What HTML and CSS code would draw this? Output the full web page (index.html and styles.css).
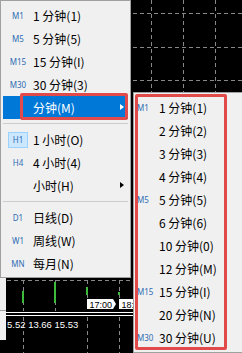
FILE: index.html
```html
<!DOCTYPE html>
<html lang="zh">

<head>
    <meta charset="UTF-8">
    <meta name="viewport" content="width=device-width, initial-scale=1.0">
    <title>周期菜单</title>
    <link rel="stylesheet" href="styles.css">
</head>

<body>
    <div class="screen">
        <!-- Chart behind the menus -->
        <svg class="chart" width="242" height="353" viewBox="0 0 242 353">
            <g class="grid">
                <line x1="23.5" y1="0" x2="23.5" y2="311" />
                <line x1="55.5" y1="0" x2="55.5" y2="311" />
                <line x1="87.5" y1="0" x2="87.5" y2="299" />
                <line x1="119.5" y1="0" x2="119.5" y2="299" />
                <line x1="151.5" y1="0" x2="151.5" y2="311" />
                <line x1="183.5" y1="0" x2="183.5" y2="311" />
                <line x1="215.5" y1="0" x2="215.5" y2="311" />
                <line x1="23.5" y1="317" x2="23.5" y2="353" />
                <line x1="87.5" y1="317" x2="87.5" y2="353" />
                <line x1="119.5" y1="317" x2="119.5" y2="353" />
                <line x1="0" y1="13.5" x2="242" y2="13.5" />
                <line x1="0" y1="47.5" x2="242" y2="47.5" />
                <line x1="0" y1="80.5" x2="242" y2="80.5" />
                <line x1="0" y1="280.5" x2="242" y2="280.5" />
            </g>
            <g fill="#3dbb3d">
                <rect x="22" y="291" width="2" height="12" />
                <rect x="54" y="282" width="2" height="21" />
                <rect x="86" y="287" width="2" height="8" />
                <rect x="118" y="292" width="2" height="3" />
            </g>
            <rect x="0" y="312" width="242" height="1" fill="#fff" />
            <rect x="0" y="315" width="242" height="1" fill="#fff" />
            <polygon points="87,299 113,299 116,304 113,309 87,309" fill="#fff" />
            <text x="89.5" y="307.5" class="tick">17:00</text>
            <polygon points="119,299 145,299 148,304 145,309 119,309" fill="#fff" />
            <text x="121.5" y="307.5" class="tick">18:00</text>
            <text x="7" y="327.5" class="price">5.52 13.66 15.53</text>
            <rect x="0" y="278" width="6" height="62" fill="#f0f0f0" />
            <rect x="0" y="310" width="6" height="1" fill="#a0a0a0" />
        </svg>

        <!-- Main period menu -->
        <div class="menu main-menu">
            <div class="item"><span class="icon">M1</span><span class="label">1 分钟(1)</span></div>
            <div class="item"><span class="icon">M5</span><span class="label">5 分钟(5)</span></div>
            <div class="item"><span class="icon">M15</span><span class="label">15 分钟(I)</span></div>
            <div class="item"><span class="icon">M30</span><span class="label">30 分钟(3)</span></div>
            <div class="item active"><span class="icon"></span><span class="label">分钟(M)</span><span class="arrow"></span></div>
            <div class="sep"></div>
            <div class="item"><span class="icon"><span class="check">H1</span></span><span class="label">1 小时(O)</span></div>
            <div class="item"><span class="icon">H4</span><span class="label">4 小时(4)</span></div>
            <div class="item"><span class="icon"></span><span class="label">小时(H)</span><span class="arrow"></span></div>
            <div class="sep"></div>
            <div class="item"><span class="icon">D1</span><span class="label">日线(D)</span></div>
            <div class="item"><span class="icon">W1</span><span class="label">周线(W)</span></div>
            <div class="item"><span class="icon">MN</span><span class="label">每月(N)</span></div>
        </div>

        <!-- Minutes submenu -->
        <div class="menu sub-menu">
            <div class="item"><span class="icon">M1</span><span class="label">1 分钟(1)</span></div>
            <div class="item"><span class="icon"></span><span class="label">2 分钟(2)</span></div>
            <div class="item"><span class="icon"></span><span class="label">3 分钟(3)</span></div>
            <div class="item"><span class="icon"></span><span class="label">4 分钟(4)</span></div>
            <div class="item"><span class="icon">M5</span><span class="label">5 分钟(5)</span></div>
            <div class="item"><span class="icon"></span><span class="label">6 分钟(6)</span></div>
            <div class="item"><span class="icon"></span><span class="label">10 分钟(0)</span></div>
            <div class="item"><span class="icon"></span><span class="label">12 分钟(M)</span></div>
            <div class="item"><span class="icon">M15</span><span class="label">15 分钟(I)</span></div>
            <div class="item"><span class="icon"></span><span class="label">20 分钟(N)</span></div>
            <div class="item"><span class="icon">M30</span><span class="label">30 分钟(U)</span></div>
        </div>

        <!-- Red highlight marks -->
        <div class="mark mark-main"></div>
        <div class="mark mark-sub"></div>
    </div>
</body>

</html>
```

FILE: styles.css
```css
* {
    box-sizing: border-box;
}

body {
    margin: 0;
    background-color: #000;
    font-family: "Noto Sans CJK SC", sans-serif;
}

.screen {
    position: relative;
    width: 242px;
    height: 353px;
    overflow: hidden;
}

.chart {
    position: absolute;
    left: 0;
    top: 0;
}

.grid line {
    stroke: #888;
    stroke-width: 1;
    stroke-dasharray: 4 3;
}

.tick {
    font-family: "Liberation Sans", sans-serif;
    font-size: 9px;
    fill: #000;
}

.price {
    font-family: "Liberation Sans", sans-serif;
    font-size: 9.5px;
    fill: #fff;
}

/* Menus */
.menu {
    position: absolute;
    background-color: #f0f0f0;
    border: 1px solid #a0a0a0;
}

.main-menu {
    left: 0;
    top: 0;
    width: 131px;
    padding: 3px 2px 2px;
}

.sub-menu {
    left: 133px;
    top: 92px;
    width: 112px;
    padding: 3px 2px;
}

.item {
    position: relative;
    display: flex;
    align-items: center;
    height: 23px;
    font-size: 12px;
    color: #000;
}

.item .icon {
    flex: 0 0 30px;
    text-align: center;
    font-family: "Noto Sans", sans-serif;
    font-size: 8px;
    color: #2e6db4;
}

.sub-menu .item .icon {
    flex-basis: 23px;
    text-align: left;
    padding-left: 1px;
}

.item .label {
    white-space: nowrap;
}

.item.active {
    background-color: #0078d7;
    color: #fff;
}

.check {
    display: inline-block;
    width: 20px;
    height: 16px;
    line-height: 14px;
    background-color: #cce8ff;
    border: 1px solid #99d1ff;
}

.arrow {
    position: absolute;
    right: 4px;
    top: 8px;
    border-left: 4px solid #000;
    border-top: 3.5px solid transparent;
    border-bottom: 3.5px solid transparent;
}

.item.active .arrow {
    border-left-color: #fff;
}

.sep {
    display: flex;
    align-items: center;
    height: 9px;
}

.sep::after {
    content: "";
    flex: 1;
    border-top: 1px solid #ccc;
}

/* Red annotation boxes */
.mark {
    position: absolute;
    border: 3px solid #e04a4a;
    border-radius: 2px;
}

.mark-main {
    left: 20px;
    top: 93px;
    width: 108px;
    height: 27px;
}

.mark-sub {
    left: 135px;
    top: 94px;
    width: 92px;
    height: 256px;
}
```
